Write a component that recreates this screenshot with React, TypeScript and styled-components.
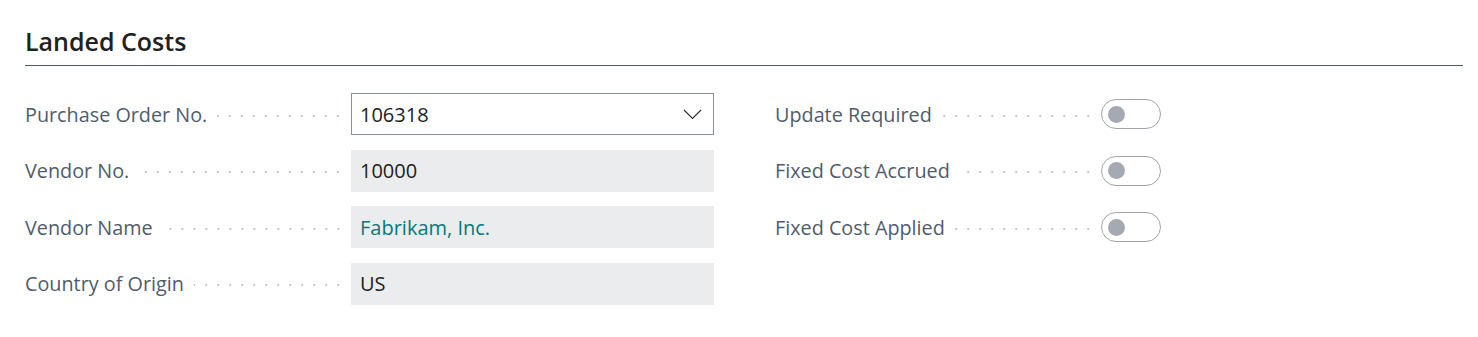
import React from "react";
import styled, { createGlobalStyle } from "styled-components";

const GlobalStyle = createGlobalStyle`
  body {
    margin: 0;
    background: #ffffff;
    font-family: "Open Sans", "Noto Sans", sans-serif;
  }
`;

const Page = styled.div`
  padding: 24px 15px 0 25px;
`;

const Title = styled.h2`
  margin: 0;
  font-size: 25px;
  font-weight: 600;
  color: #212121;
  line-height: 34px;
  padding-bottom: 7px;
  border-bottom: 1px solid #505a67;
`;

const Columns = styled.div`
  display: grid;
  grid-template-columns: 689px 385px;
  column-gap: 61px;
  padding-top: 27px;
`;

const FieldList = styled.div`
  display: flex;
  flex-direction: column;
  gap: 14.5px;
`;

const Row = styled.div<{ $labelWidth: number }>`
  display: grid;
  grid-template-columns: ${(p) => p.$labelWidth}px 1fr;
  column-gap: 11px;
  align-items: center;
  height: 42px;
`;

const Caption = styled.div`
  display: flex;
  align-items: center;
  min-width: 0;
`;

const LabelText = styled.span`
  font-size: 19.8px;
  color: #505c6d;
  white-space: nowrap;
  padding-right: 10px;
`;

const Leader = styled.span`
  flex: 1;
  height: 4px;
  margin-top: 3px;
  margin-right: -4px;
  background-image: radial-gradient(circle, #c4c7cc 1.2px, transparent 1.5px);
  background-size: 12px 4px;
  background-position: right center;
  background-repeat: repeat-x;
`;

const ValueBox = styled.div<{ $link?: boolean }>`
  height: 42px;
  box-sizing: border-box;
  padding: 0 9px;
  display: flex;
  align-items: center;
  background: #ebecee;
  font-size: 20px;
  color: ${(p) => (p.$link ? "#007a7c" : "#212121")};
`;

const Select = styled.div`
  height: 42px;
  box-sizing: border-box;
  padding: 0 11px 0 8px;
  display: flex;
  align-items: center;
  justify-content: space-between;
  border: 1px solid #8a919c;
  background: #ffffff;
  font-size: 20px;
  color: #212121;
`;

const Toggle = styled.div`
  width: 60px;
  height: 30px;
  box-sizing: border-box;
  border: 1px solid #a0a5ad;
  border-radius: 15px;
  display: flex;
  align-items: center;
  padding-left: 6px;
`;

const Knob = styled.span`
  width: 17px;
  height: 17px;
  border-radius: 50%;
  background: #a5a9b2;
`;

const Chevron = () => (
  <svg width="19" height="11" viewBox="0 0 19 11" fill="none">
    <path d="M1 1 L9.5 9.5 L18 1" stroke="#2b2b2b" strokeWidth="1.1" />
  </svg>
);

function Label({ children }: { children: React.ReactNode }) {
  return (
    <Caption>
      <LabelText>{children}</LabelText>
      <Leader />
    </Caption>
  );
}

export default function App() {
  return (
    <Page>
      <GlobalStyle />
      <Title>Landed Costs</Title>
      <Columns>
        <FieldList>
          <Row $labelWidth={315}>
            <Label>Purchase Order No.</Label>
            <Select>
              106318
              <Chevron />
            </Select>
          </Row>
          <Row $labelWidth={315}>
            <Label>Vendor No.</Label>
            <ValueBox>10000</ValueBox>
          </Row>
          <Row $labelWidth={315}>
            <Label>Vendor Name</Label>
            <ValueBox $link>Fabrikam, Inc.</ValueBox>
          </Row>
          <Row $labelWidth={315}>
            <Label>Country of Origin</Label>
            <ValueBox>US</ValueBox>
          </Row>
        </FieldList>
        <FieldList>
          <Row $labelWidth={315}>
            <Label>Update Required</Label>
            <Toggle>
              <Knob />
            </Toggle>
          </Row>
          <Row $labelWidth={315}>
            <Label>Fixed Cost Accrued</Label>
            <Toggle>
              <Knob />
            </Toggle>
          </Row>
          <Row $labelWidth={315}>
            <Label>Fixed Cost Applied</Label>
            <Toggle>
              <Knob />
            </Toggle>
          </Row>
        </FieldList>
      </Columns>
    </Page>
  );
}
